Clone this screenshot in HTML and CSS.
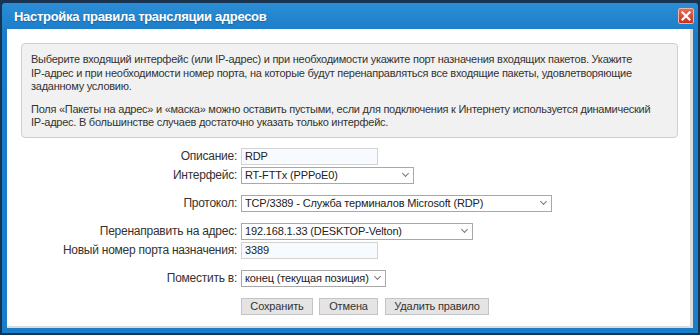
FILE: index.html
```html
<!DOCTYPE html>
<html>
<head>
  <meta charset="UTF-8">
  <title>Настройка правила трансляции адресов</title>
  <link rel="stylesheet" href="styles.css">
</head>
<body>
  <div class="dialog">
    <div class="titlebar">
      <span class="title">Настройка правила трансляции адресов</span>
      <span class="close">
        <svg width="10" height="10" viewBox="0 0 10 10">
          <path d="M1.5 1.5 L8.5 8.5 M8.5 1.5 L1.5 8.5" stroke="#fff" stroke-width="2.2" stroke-linecap="square"/>
        </svg>
      </span>
    </div>
    <div class="content">
      <div class="info">
        <p>Выберите входящий интерфейс (или IP-&#8288;адрес) и при необходимости укажите порт назначения входящих пакетов. Укажите IP-&#8288;адрес и при необходимости номер порта, на которые будут перенаправляться все входящие пакеты, удовлетворяющие заданному условию.</p>
        <p>Поля «Пакеты на адрес» и «маска» можно оставить пустыми, если для подключения к Интернету используется динамический IP-&#8288;адрес. В большинстве случаев достаточно указать только интерфейс.</p>
      </div>
      <div class="form">
        <div class="row">
          <label class="name">Описание:</label>
          <input class="text" type="text" value="RDP">
        </div>
        <div class="row">
          <label class="name">Интерфейс:</label>
          <span class="select w-iface"><select><option>RT-FTTx (PPPoE0)</option></select></span>
        </div>
        <div class="row sep">
          <label class="name">Протокол:</label>
          <span class="select w-proto"><select><option>TCP/3389 - Служба терминалов Microsoft (RDP)</option></select></span>
        </div>
        <div class="row sep">
          <label class="name">Перенаправить на адрес:</label>
          <span class="select w-addr"><select><option>192.168.1.33 (DESKTOP-Velton)</option></select></span>
        </div>
        <div class="row">
          <label class="name">Новый номер порта назначения:</label>
          <input class="text" type="text" value="3389">
        </div>
        <div class="row sep">
          <label class="name">Поместить в:</label>
          <span class="select w-pos"><select><option>конец (текущая позиция)</option></select></span>
        </div>
        <div class="row sep buttons">
          <span class="name"></span>
          <button class="btn w-save">Сохранить</button>
          <button class="btn w-cancel">Отмена</button>
          <button class="btn w-del">Удалить правило</button>
        </div>
      </div>
    </div>
  </div>
</body>
</html>
```

FILE: styles.css
```css
body {
  margin: 0;
  height: 335px;
  overflow: hidden;
  background: #173552;
  font-family: "Liberation Sans", Arial, sans-serif;
  font-size: 12px;
  letter-spacing: -0.25px;
  color: #333;
}
.dialog {
  margin: 3px 2px 0;
  height: 330px;
  box-sizing: border-box;
  padding: 0 5px 5px;
  background: linear-gradient(#2b8ed6, #1b7cc8 30px, #1a7ecb);
  border-radius: 3px 3px 0 0;
  display: flex;
  flex-direction: column;
}
.titlebar {
  height: 26px;
  display: flex;
  align-items: center;
  justify-content: space-between;
  padding: 0 0 0 7px;
}
.title {
  color: #fff;
  font-weight: bold;
  font-size: 13px;
  letter-spacing: -0.3px;
  text-shadow: 0 1px 1px rgba(0, 0, 0, 0.25);
}
.close {
  width: 16px;
  height: 16px;
  box-sizing: border-box;
  margin-right: -1px;
  border: 1px solid #f3b2a6;
  border-radius: 2px;
  background: linear-gradient(#ec6a52, #c8301c);
  display: flex;
  align-items: center;
  justify-content: center;
}
.content {
  flex: 1;
  background: #fff;
  border-right: 3px solid #dcdcdc;
  border-bottom: 2px solid #dcdcdc;
  padding: 14px 12px 0 14px;
}
.info {
  background: #f1f1f1;
  border: 1px solid #cfcfcf;
  border-radius: 4px;
  padding: 9px 16px 7px 9px;
  font-size: 11px;
  letter-spacing: -0.25px;
  line-height: 13.5px;
}
.info p {
  margin: 0;
}
.info p + p {
  margin-top: 9px;
}
.form {
  margin-top: 10px;
}
.row {
  display: flex;
  align-items: center;
  height: 17px;
  margin-top: 2px;
}
.row.sep {
  margin-top: 11px;
}
.name {
  width: 216px;
  margin-right: 4px;
  text-align: right;
  flex: none;
}
.text {
  width: 137px;
  height: 17px;
  box-sizing: border-box;
  border: 1px solid #d2d2d2;
  background: #f7fbff;
  font: 11px "Liberation Sans", Arial, sans-serif;
  letter-spacing: -0.15px;
  color: #222;
  padding: 0 3px;
  margin: 0;
}
.select {
  position: relative;
  display: block;
  height: 17px;
}
.select select {
  appearance: none;
  -webkit-appearance: none;
  width: 100%;
  height: 17px;
  box-sizing: border-box;
  border: 1px solid #a8a8a8;
  border-radius: 0;
  background: #fff;
  font: 11px "Liberation Sans", Arial, sans-serif;
  letter-spacing: -0.15px;
  color: #222;
  padding: 0 12px 0 3px;
  margin: 0;
}
.select::after {
  content: "";
  position: absolute;
  right: 6px;
  top: 4px;
  width: 4px;
  height: 4px;
  border-right: 1px solid #777;
  border-bottom: 1px solid #777;
  transform: rotate(45deg);
}
.w-iface { width: 173px; }
.w-proto { width: 311px; }
.w-addr { width: 232px; }
.w-pos { width: 145px; }
.btn {
  height: 17px;
  box-sizing: border-box;
  border: 1px solid #c4c4c4;
  background: #e4e4e4;
  font: 11px "Liberation Sans", Arial, sans-serif;
  letter-spacing: -0.15px;
  color: #333;
  padding: 0;
  margin: 0 6px 0 0;
}
.w-save { width: 72px; }
.w-cancel { width: 59px; margin-right: 7px; }
.w-del { width: 104px; }
```
